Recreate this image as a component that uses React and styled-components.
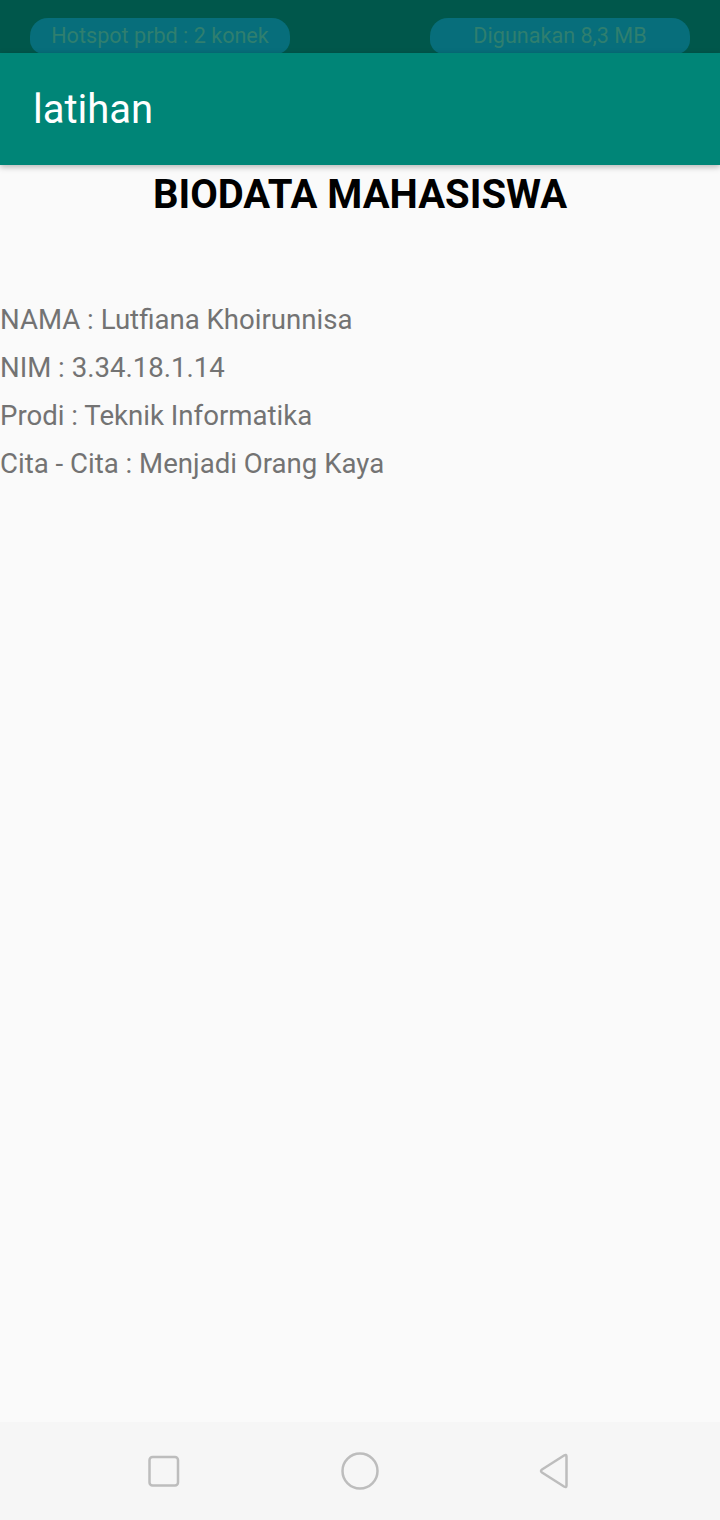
import React from "react";
import styled, { createGlobalStyle } from "styled-components";

const Global = createGlobalStyle`
  html, body { margin: 0; padding: 0; }
  body { background: #fafafa; font-family: Roboto, "Noto Sans", sans-serif; }
`;

const Screen = styled.div`
  width: 720px;
  height: 1520px;
  display: flex;
  flex-direction: column;
  background: #fafafa;
  overflow: hidden;
`;

const StatusBar = styled.div`
  height: 53px;
  flex: none;
  background: #00574b;
  display: flex;
  align-items: flex-end;
  justify-content: space-between;
  padding: 0 30px;
  box-sizing: border-box;
`;

const Pill = styled.div`
  width: 260px;
  height: 36px;
  margin-bottom: -1px;
  border-radius: 18px 18px 14px 14px;
  background: #076e7b;
  color: #2f7f6f;
  font-size: 21.6px;
  display: flex;
  align-items: center;
  justify-content: center;
  box-sizing: border-box;
  padding-bottom: 1px;
`;

const AppBar = styled.header`
  height: 112px;
  flex: none;
  background: #008577;
  display: flex;
  align-items: center;
  padding-left: 33px;
  box-shadow: 0 2px 6px rgba(0, 0, 0, 0.28);
  position: relative;
  z-index: 1;
`;

const Title = styled.h1`
  margin: 0;
  font-size: 40px;
  font-weight: 400;
  color: #ffffff;
`;

const Content = styled.main`
  flex: 1;
  display: flex;
  flex-direction: column;
`;

const Heading = styled.h2`
  margin: 6px 0 0;
  text-align: center;
  font-size: 40px;
  line-height: 48px;
  font-weight: 700;
  color: #000;
`;

const List = styled.div`
  margin-top: 77px;
  display: flex;
  flex-direction: column;
`;

const Line = styled.p`
  margin: 0;
  font-size: 27.6px;
  line-height: 48px;
  color: #737373;
`;

const NavBar = styled.nav`
  height: 98px;
  flex: none;
  background: #f6f6f6;
  display: flex;
  align-items: center;
  justify-content: center;
  gap: 156px;
`;

const NavIcon = styled.svg`
  width: 40px;
  height: 40px;
  flex: none;
`;

export default function App() {
  return (
    <>
      <Global />
      <Screen>
        <StatusBar>
          <Pill>Hotspot prbd : 2 konek</Pill>
          <Pill>Digunakan 8,3 MB</Pill>
        </StatusBar>
        <AppBar>
          <Title>latihan</Title>
        </AppBar>
        <Content>
          <Heading>BIODATA MAHASISWA</Heading>
          <List>
            <Line>NAMA : Lutfiana Khoirunnisa</Line>
            <Line>NIM : 3.34.18.1.14</Line>
            <Line>Prodi : Teknik Informatika</Line>
            <Line>Cita - Cita : Menjadi Orang Kaya</Line>
          </List>
        </Content>
        <NavBar>
          <NavIcon viewBox="0 0 40 40">
            <rect x="5.5" y="6" width="28.5" height="28.5" rx="3" fill="none" stroke="#bdbdbd" strokeWidth="2.5" />
          </NavIcon>
          <NavIcon viewBox="0 0 40 40">
            <circle cx="20" cy="20" r="17.5" fill="none" stroke="#bdbdbd" strokeWidth="2.5" />
          </NavIcon>
          <NavIcon viewBox="0 0 40 40">
            <path d="M30.5 5.5 L30.5 34.5 Q30.5 37 28 35.5 L6 21.5 Q4 20 6 18.5 L28 4.5 Q30.5 3 30.5 5.5 Z" fill="none" stroke="#bdbdbd" strokeWidth="2.5" strokeLinejoin="round" />
          </NavIcon>
        </NavBar>
      </Screen>
    </>
  );
}
